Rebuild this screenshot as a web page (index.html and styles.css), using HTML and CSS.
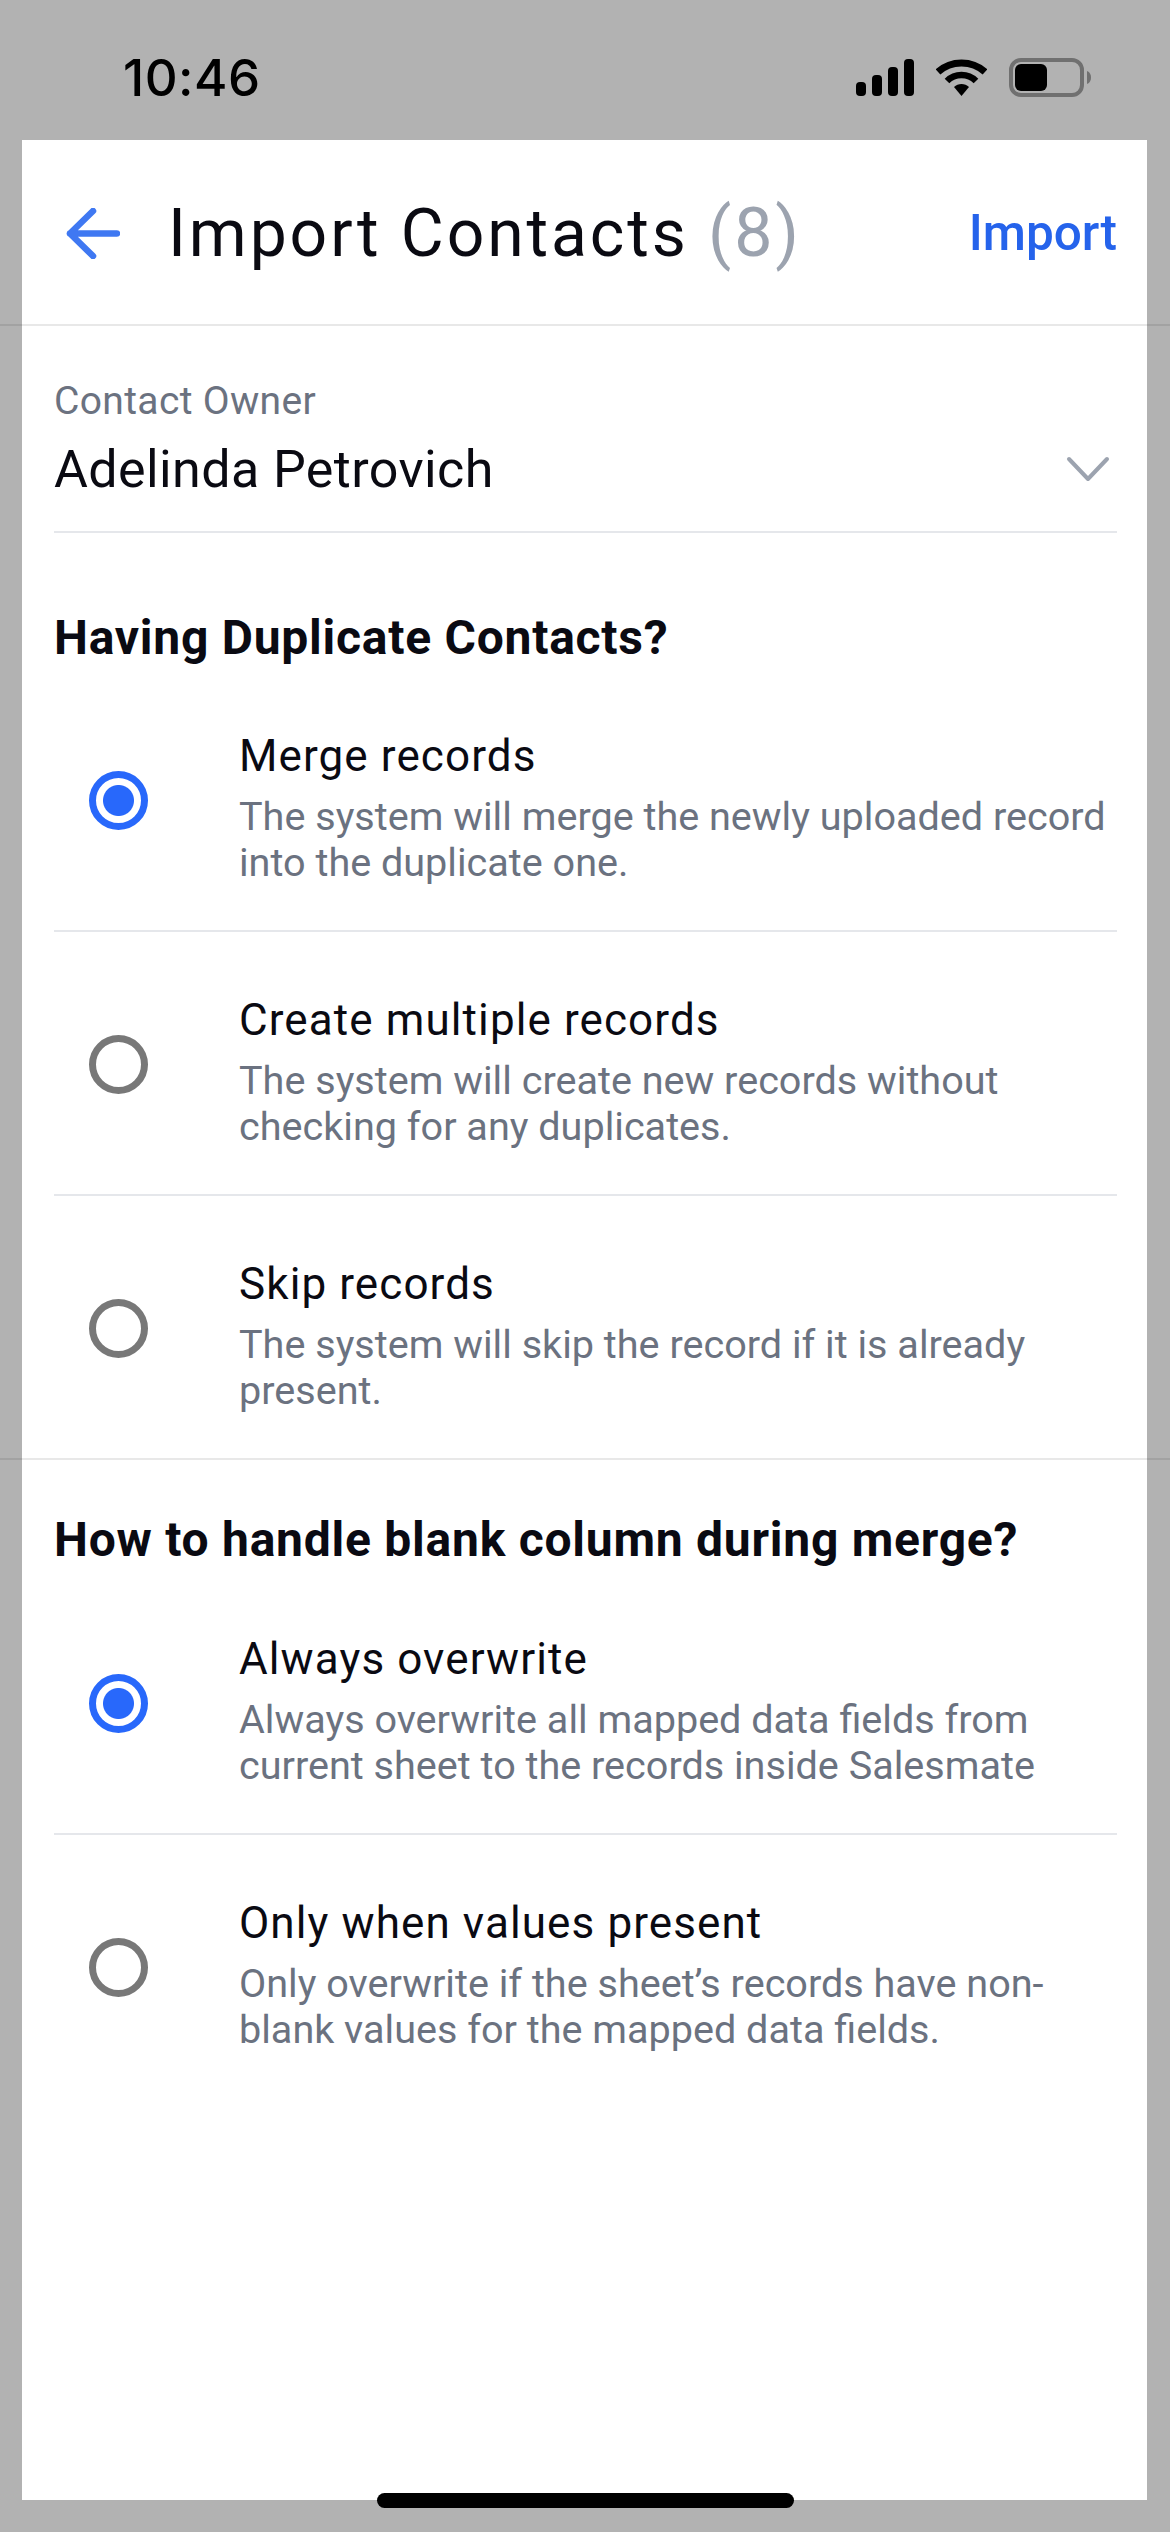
FILE: index.html
```html
<!DOCTYPE html>
<html lang="en">
<head>
    <meta charset="UTF-8">
    <meta name="viewport" content="width=device-width, initial-scale=1.0">
    <title>Import Contacts</title>
    <link rel="stylesheet" href="styles.css">
</head>
<body>
    <div class="status-bar">
        <span class="time">10:46</span>
        <div class="status-icons">
            <svg class="signal" width="58" height="37" viewBox="0 0 58 37">
                <rect x="0" y="23" width="10" height="14" rx="4"/>
                <rect x="16" y="16" width="10" height="21" rx="4"/>
                <rect x="32" y="8" width="10" height="29" rx="4"/>
                <rect x="48" y="0" width="10" height="37" rx="4"/>
            </svg>
            <svg class="wifi" width="51" height="37" viewBox="0 0 51 37">
                <path d="M2 13 C15 1 36 1 49 13" fill="none" stroke="#000" stroke-width="7"/>
                <path d="M11 22 C19 14 32 14 40 22" fill="none" stroke="#000" stroke-width="6.5"/>
                <path d="M18 28 C22 24 29 24 33 28 L25.5 37 Z"/>
            </svg>
            <svg class="battery" width="82" height="39" viewBox="0 0 82 39">
                <rect x="2" y="2" width="71" height="35" rx="10" fill="none" stroke="#707070" stroke-width="4"/>
                <rect x="6" y="6" width="32" height="27" rx="6"/>
                <path d="M78 13 C81 14 82 17 82 19.5 C82 22 81 25 78 26 Z" fill="#707070"/>
            </svg>
        </div>
    </div>

    <div class="card">
        <div class="topbar">
            <svg class="back" width="54" height="51" viewBox="0 0 54 51">
                <path d="M27 3 L4 25.5 L27 48 M4 25.5 H51" fill="none" stroke="#3f78f2" stroke-width="6.5" stroke-linecap="round" stroke-linejoin="round"/>
            </svg>
            <h1 class="title">Import Contacts <span class="count">(8)</span></h1>
            <a href="#" class="import">Import</a>
        </div>

        <div class="content">
            <div class="owner">
                <div class="owner-text">
                    <div class="owner-label">Contact Owner</div>
                    <div class="owner-name">Adelinda Petrovich</div>
                </div>
                <svg class="chevron" width="44" height="26" viewBox="0 0 44 26">
                    <path d="M3 3 L22 23 L41 3" fill="none" stroke="#9ca3af" stroke-width="4" stroke-linecap="round" stroke-linejoin="round"/>
                </svg>
            </div>

            <h2 class="section-title first">Having Duplicate Contacts?</h2>
            <div class="option">
                <span class="radio checked"></span>
                <div class="option-text">
                    <div class="option-title">Merge records</div>
                    <div class="option-desc">The system will merge the newly uploaded record into the duplicate one.</div>
                </div>
            </div>
            <div class="option">
                <span class="radio"></span>
                <div class="option-text">
                    <div class="option-title">Create multiple records</div>
                    <div class="option-desc">The system will create new records without checking for any duplicates.</div>
                </div>
            </div>
            <div class="option last">
                <span class="radio"></span>
                <div class="option-text">
                    <div class="option-title">Skip records</div>
                    <div class="option-desc">The system will skip the record if it is already present.</div>
                </div>
            </div>

            <div class="full-rule"></div>

            <h2 class="section-title">How to handle blank column during merge?</h2>
            <div class="option">
                <span class="radio checked"></span>
                <div class="option-text">
                    <div class="option-title">Always overwrite</div>
                    <div class="option-desc">Always overwrite all mapped data fields from current sheet to the records inside Salesmate</div>
                </div>
            </div>
            <div class="option last">
                <span class="radio"></span>
                <div class="option-text">
                    <div class="option-title">Only when values present</div>
                    <div class="option-desc">Only overwrite if the sheet’s records have non-blank values for the mapped data fields.</div>
                </div>
            </div>
        </div>
    </div>

    <div class="home-bar"></div>
</body>
</html>
```

FILE: styles.css
```css
html, body {
    margin: 0;
    padding: 0;
}
body {
    position: relative;
    width: 1170px;
    height: 2532px;
    overflow: hidden;
    background-color: #b2b2b2;
    font-family: Roboto, "Liberation Sans", sans-serif;
    color: #0a0a12;
}
.status-bar {
    height: 140px;
    box-sizing: border-box;
    padding: 50px 79px 0 123px;
    display: flex;
    justify-content: space-between;
    align-items: flex-start;
}
.time {
    font-family: Inter, Roboto, sans-serif;
    font-size: 51px;
    line-height: 56px;
    font-weight: 500;
    letter-spacing: 0.5px;
    color: #000;
}
.status-icons {
    display: flex;
    align-items: center;
    gap: 22px;
    margin-top: 8px;
}
.card {
    margin-left: 22px;
    width: 1125px;
    height: 2360px;
    background: #fff;
}
.topbar {
    position: relative;
    height: 186px;
    box-sizing: border-box;
    padding: 0 30px 0 44px;
    display: flex;
    align-items: center;
}
/* hairline runs past the card over the grey */
.topbar::after {
    content: "";
    position: absolute;
    left: -22px;
    right: -23px;
    bottom: 0;
    height: 2px;
    background: rgba(0, 0, 0, 0.09);
}
.back {
    flex: none;
}
.title {
    margin: 0 0 0 48px;
    flex: 1;
    font-size: 66px;
    font-weight: 400;
    letter-spacing: 2.9px;
}
.count {
    color: #9ca3af;
    font-size: 68px;
}
.import {
    color: #2563eb;
    font-size: 49.5px;
    font-weight: 500;
    text-decoration: none;
}
.content {
    padding: 0 30px 0 32px;
}
.owner {
    height: 207px;
    box-sizing: border-box;
    border-bottom: 2px solid #e5e7eb;
    padding-top: 53px;
    display: flex;
    justify-content: space-between;
}
.owner-label {
    font-size: 39px;
    line-height: 44px;
    letter-spacing: 0.35px;
    color: #6b7280;
}
.owner-name {
    font-size: 52px;
    line-height: 62px;
    letter-spacing: 0.4px;
    margin-top: 16px;
}
.chevron {
    margin: 77px 7px 0 0;
}
.section-title {
    margin: 0;
    font-size: 48px;
    font-weight: 700;
    line-height: 54px;
    letter-spacing: 0.75px;
    padding-top: 53px;
    height: 58px;
}
.section-title.first {
    padding-top: 78px;
    height: 57px;
}
.full-rule {
    height: 2px;
    margin: 0 -53px 0 -54px;
    background: rgba(0, 0, 0, 0.09);
}
.option {
    height: 264px;
    box-sizing: border-box;
    border-bottom: 2px solid #e5e7eb;
    display: flex;
    align-items: center;
}
.option.last {
    height: 262px;
    border-bottom: none;
}
.radio {
    flex: none;
    width: 59px;
    height: 59px;
    box-sizing: border-box;
    margin: 2px 91px 0 35px;
    border: 7px solid #787878;
    border-radius: 50%;
}
.radio.checked {
    border-color: #2868fb;
    background: radial-gradient(circle, #2868fb 15px, #fff 16px);
}
.option-text {
    flex: 1;
    padding-top: 17px;
}
.option-title {
    font-size: 44px;
    line-height: 54px;
    letter-spacing: 1.1px;
    margin-bottom: 11px;
}
.option-desc {
    font-size: 39.6px;
    line-height: 46px;
    color: #6b7280;
}
.home-bar {
    position: absolute;
    left: 377px;
    top: 2493px;
    width: 417px;
    height: 15px;
    background: #000;
    border-radius: 8px;
}
```
